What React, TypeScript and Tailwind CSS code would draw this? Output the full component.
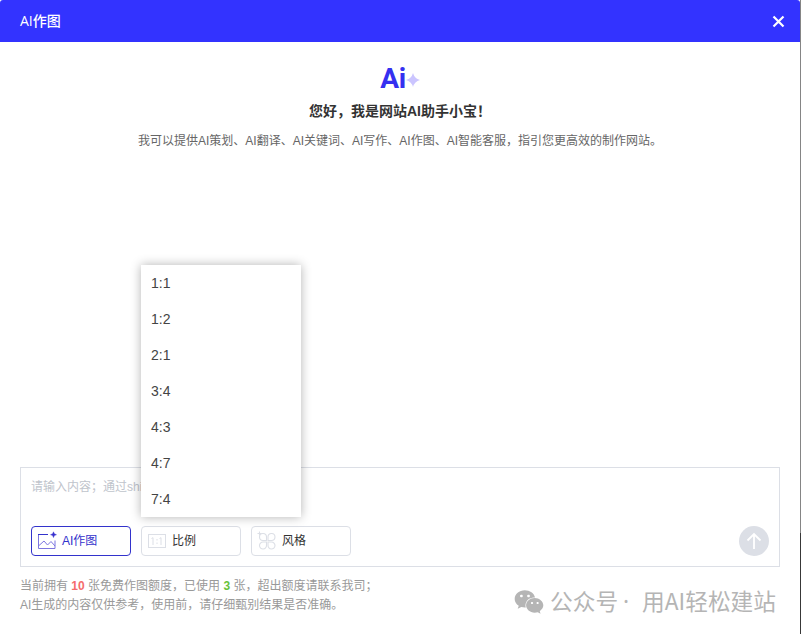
import { FaWeixin } from 'react-icons/fa'

const ratios = ['1:1', '1:2', '2:1', '3:4', '4:3', '4:7', '7:4']

function DrawIcon() {
  return (
    <svg width="20" height="20" viewBox="0 0 20 20" fill="none" stroke="#7d76e0" className="shrink-0">
      <path d="M1.500 3.500v14h16.500V9.500" />
      <path d="M2 14.500l5-4.500 3.500 4 3.500-3.500 4 4.500" />
      <path d="M1 3.500h10" stroke="#3333cc" />
      <path d="M16.500 .8l.9 2 2.100.9-2.100.9-.9 2-.9-2-2.100-.9 2.100-.9z" fill="#3a32cf" stroke="#3a32cf" strokeWidth=".4" />
    </svg>
  )
}

function RatioIcon() {
  return (
    <svg width="20" height="20" viewBox="0 0 20 20" fill="none" stroke="#dcdfe6" className="shrink-0">
      <rect x="1.500" y="3.500" width="17" height="13" />
      <path d="M4.500 7.500l1.500-.8V14M12.500 7.500l1.500-.8V14M10 8v1.500M10 11.500V13" />
    </svg>
  )
}

function StyleIcon() {
  return (
    <svg width="20" height="20" viewBox="0 0 20 20" fill="none" stroke="#dcdfe6" strokeWidth="1.100" className="shrink-0">
      <path d="M9.500 9.500V5.700a3.500 3.500 0 1 0-3.500 3.800z" />
      <path d="M11 9.500V5.700a3.500 3.500 0 1 1 3.500 3.800z" />
      <path d="M9.500 11v3.300a3.500 3.500 0 1 1-3.500-3.300z" />
      <path d="M11 11v3.300a3.500 3.500 0 1 0 3.500-3.300z" />
      <path d="M2.500 .5v4M.5 2.500h4" />
    </svg>
  )
}

function RatioMenu() {
  return (
    <ul className="absolute bottom-[39px] left-0 z-10 w-[160px] bg-white shadow-[0_0_10px_rgba(0,0,0,0.3)]">
      {ratios.map((ratio) => (
        <li key={ratio} className="flex h-9 items-center pl-[10px] text-[14px] text-[#444]">
          {ratio}
        </li>
      ))}
    </ul>
  )
}

export default function App() {
  return (
    <div className="flex h-[634px] w-[801px] overflow-hidden bg-white font-['Liberation_Sans','Noto_Sans_CJK_SC',sans-serif] text-[12px]">
      <div className="flex w-[800px] flex-col">
        <header className="flex h-[42px] shrink-0 items-center justify-between rounded-t-[3px] bg-[#3333ff] pr-[15px] pl-5 text-white">
          <h1 className="pb-[2px] font-['Open_Sans','Noto_Sans_CJK_SC',sans-serif] text-[14px] font-medium">AI作图</h1>
          <button aria-label="关闭">
            <svg width="13" height="13" viewBox="0 0 13 13" stroke="white" strokeWidth="2.200">
              <path d="M1.500 1.500l10 10M11.500 1.500l-10 10" />
            </svg>
          </button>
        </header>

        <main className="flex flex-1 flex-col items-center pt-[23px]">
          <div className="flex h-7 items-center">
            <span className="font-[Roboto,sans-serif] text-[28px] leading-7 font-bold tracking-[-0.3px] text-[#3530f0]">Ai</span>
            <svg width="14" height="14" viewBox="0 0 14 14" fill="#cbc5ff" className="mt-px">
              <path d="M7 0q1.500 5.500 7 7-5.500 1.500-7 7-1.500-5.500-7-7 5.500-1.500 7-7z" />
            </svg>
          </div>
          <h2 className="mt-[7px] h-[22px] text-[14px] leading-[22px] font-bold whitespace-nowrap text-[#333]">您好，我是网站AI助手小宝！</h2>
          <p className="mt-[9px] h-5 leading-5 whitespace-nowrap text-[#666]">
            我可以提供AI策划、AI翻译、AI关键词、AI写作、AI作图、AI智能客服，指引您更高效的制作网站。
          </p>
        </main>

        <section className="mx-5 flex h-[100px] shrink-0 flex-col justify-between border border-[#dcdfe6] px-[10px] pt-[10px] pb-[10px]">
          <div className="h-[18px] w-[110px] overflow-hidden leading-[18px] whitespace-nowrap text-[#c0c4cc]">请输入内容；通过shi</div>
          <div className="flex items-center justify-between">
            <div className="flex gap-[10px]">
              <button className="flex h-[30px] w-[100px] items-center rounded-[4px] border border-[#3333cc] pl-[5px] text-[#3333cc]">
                <DrawIcon />
                <span className="ml-[5px]">AI作图</span>
              </button>
              <div className="relative">
                <button className="flex h-[30px] w-[100px] items-center rounded-[4px] border border-[#dcdfe6] pl-[5px] text-[#333]">
                  <RatioIcon />
                  <span className="ml-[5px]">比例</span>
                </button>
                <RatioMenu />
              </div>
              <button className="flex h-[30px] w-[100px] items-center rounded-[4px] border border-[#dcdfe6] pl-[5px] text-[#333]">
                <StyleIcon />
                <span className="ml-[5px]">风格</span>
              </button>
            </div>
            <button aria-label="发送" className="flex size-[30px] items-center justify-center rounded-full bg-[#dcdfe6]">
              <svg width="16" height="18" viewBox="0 0 16 18" fill="none" stroke="white" strokeWidth="1.800">
                <path d="M8 17V2M1.500 8.500L8 2l6.500 6.500" />
              </svg>
            </button>
          </div>
        </section>

        <footer className="flex h-[67px] shrink-0 justify-between pr-[24px] pl-5 whitespace-nowrap">
          <div className="pt-[10px] leading-[19px] text-[#999]">
            <p>
              当前拥有 <b className="text-[#f56c6c]">10</b> 张免费作图额度，已使用 <b className="text-[#67c23a]">3</b> 张，超出额度请联系我司；
            </p>
            <p>AI生成的内容仅供参考，使用前，请仔细甄别结果是否准确。</p>
          </div>
          <div className="mt-5 flex h-[30px] items-center text-[#b5b5b5]">
            <FaWeixin size={30} />
            <span className="ml-[6px] pb-[2px] font-['Noto_Sans_CJK_SC',sans-serif] text-[22.700px] leading-[30px]">
              公众号<span className="inline-block w-[24px] pl-[5px] font-['Noto_Sans',sans-serif]">·</span>用AI轻松建站
            </span>
          </div>
        </footer>
      </div>
      <div className="flex w-px flex-col">
        <div className="h-[533px] bg-[#858585]" />
        <div className="flex-1 bg-[#383838]" />
      </div>
    </div>
  )
}
